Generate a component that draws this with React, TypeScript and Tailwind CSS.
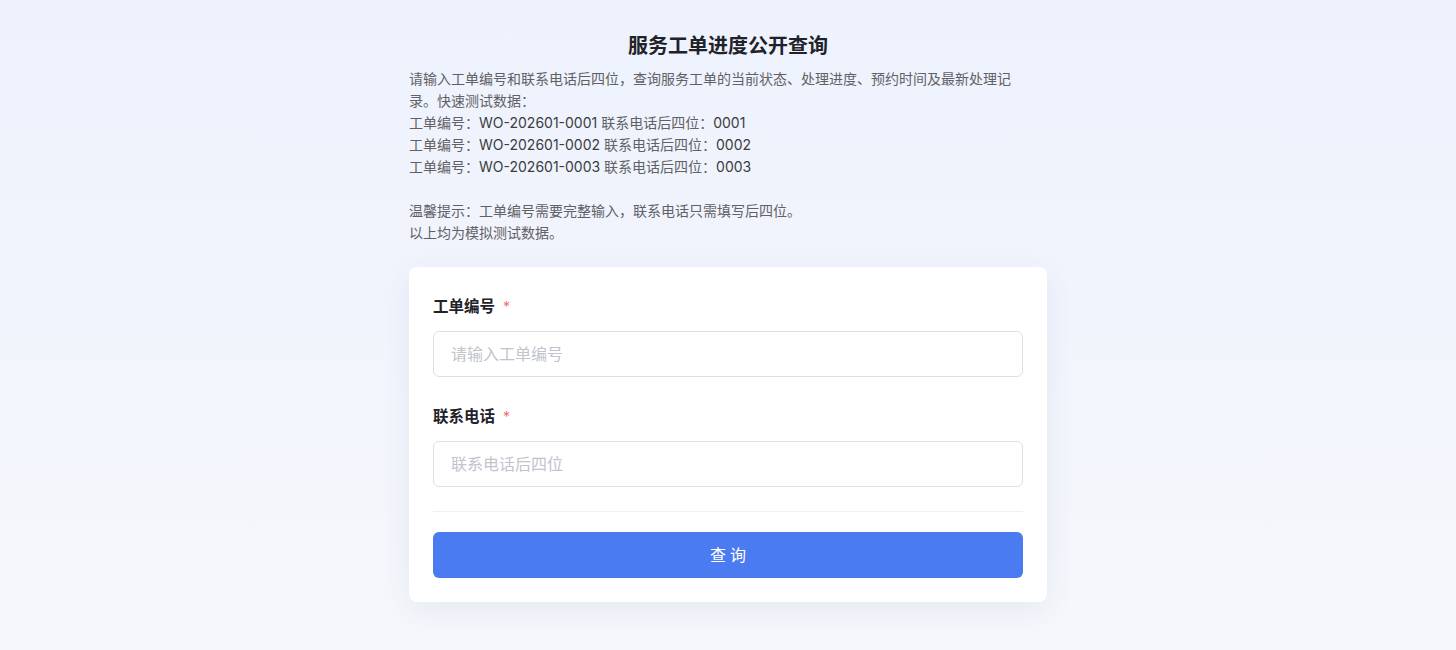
import React from 'react';

const samples = [
  { no: 'WO-202601-0001', phone: '0001' },
  { no: 'WO-202601-0002', phone: '0002' },
  { no: 'WO-202601-0003', phone: '0003' },
];

export default function App() {
  return (
    <div
      className="min-h-screen w-full bg-gradient-to-b from-[#eef2fd] to-[#f5f7fb] text-[#303133]"
      style={{ fontFamily: '"Inter", "Noto Sans CJK SC", sans-serif' }}
    >
      <div className="mx-auto flex w-[638px] flex-col pt-8">
        <h1 className="text-center text-[20px] font-bold leading-[28px] text-[#1f2329]">服务工单进度公开查询</h1>

        {/* Intro & test data */}
        <div className="mt-2 w-[610px] text-[14px] leading-[22px] text-[#5f6166]">
          <p>请输入工单编号和联系电话后四位，查询服务工单的当前状态、处理进度、预约时间及最新处理记录。快速测试数据：</p>
          {samples.map((s) => (
            <p key={s.no}>
              工单编号：<span className="text-[#3a3c40]">{s.no}</span> 联系电话后四位：<span className="text-[#3a3c40]">{s.phone}</span>
            </p>
          ))}
          <div className="h-[22px]" />
          <p>温馨提示：工单编号需要完整输入，联系电话只需填写后四位。</p>
          <p>以上均为模拟测试数据。</p>
        </div>

        {/* Query card */}
        <div className="mt-[23px] rounded-lg bg-white px-6 pb-6 pt-[29px] shadow-[0_8px_30px_rgba(60,80,140,0.08)]">
          <label className="flex items-center text-[15.5px] font-semibold leading-[22px] text-[#1f2329]">
            工单编号
            <span className="ml-2 text-[14px] font-normal text-[#f56c6c]">*</span>
          </label>
          <input
            className="mt-[13px] h-[46px] w-full rounded-md border border-[#dcdfe6] px-[17px] text-[16px] outline-none placeholder:text-[#c0c4cc]"
            placeholder="请输入工单编号"
          />

          <label className="mt-[29px] flex items-center text-[15.5px] font-semibold leading-[22px] text-[#1f2329]">
            联系电话
            <span className="ml-2 text-[14px] font-normal text-[#f56c6c]">*</span>
          </label>
          <input
            className="mt-[13px] h-[46px] w-full rounded-md border border-[#dcdfe6] px-[17px] text-[16px] outline-none placeholder:text-[#c0c4cc]"
            placeholder="联系电话后四位"
          />

          <div className="mt-6 h-px bg-[#eef0f4]" />

          <button className="mt-[20px] flex h-[46px] w-full items-center justify-center rounded-md bg-[#4b7bf0] pl-1 text-[16px] tracking-[4px] text-white">
            查询
          </button>
        </div>
      </div>
    </div>
  );
}
